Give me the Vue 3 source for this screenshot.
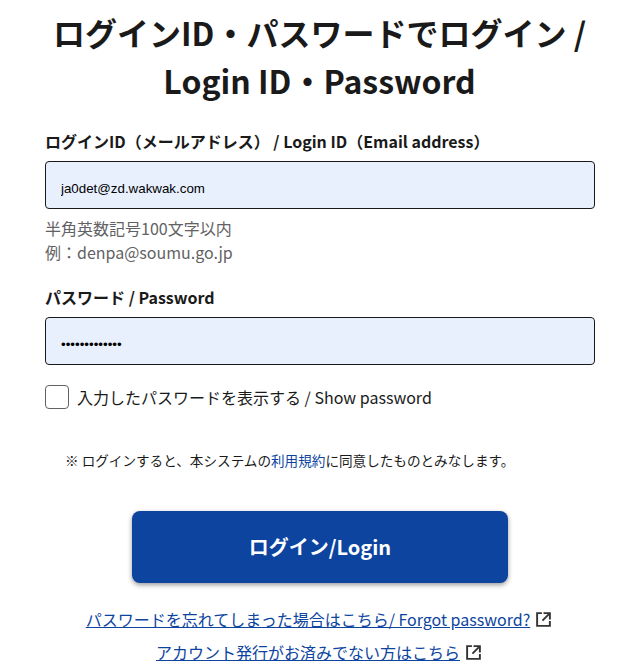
<script setup>
import { ref } from "vue";
const loginId = ref("ja0det@zd.wakwak.com");
const password = ref("aaaaaaaaaaaaa");
const showPassword = ref(false);
</script>
<template>
  <main class="page">
    <h1 class="title">ログインID・パスワードでログイン / Login ID・Password</h1>
    <form class="form" @submit.prevent>
      <div class="field">
        <label class="label" for="login-id">ログインID（メールアドレス） / Login ID（Email address）</label>
        <input id="login-id" v-model="loginId" class="input" type="text" />
        <p class="hint">半角英数記号100文字以内<br />例：denpa@soumu.go.jp</p>
      </div>
      <div class="field field-password">
        <label class="label" for="password">パスワード / Password</label>
        <input id="password" v-model="password" class="input" :type="showPassword ? 'text' : 'password'" />
      </div>
      <label class="check">
        <input v-model="showPassword" class="checkbox" type="checkbox" />
        <span>入力したパスワードを表示する / Show password</span>
      </label>
      <p class="notice">※ ログインすると、本システムの<a href="#">利用規約</a>に同意したものとみなします。</p>
      <button class="submit" type="submit">ログイン/Login</button>
      <div class="links">
        <p class="link-row">
          <a href="#">パスワードを忘れてしまった場合はこちら/ Forgot password?</a>
          <svg class="ext" viewBox="0 0 16 16" fill="none" stroke="#333" stroke-width="1.8">
            <path d="M6.5 2H2v12h12V9.5" />
            <path d="M8 2h6v6M14 2L7 9" />
          </svg>
        </p>
        <p class="link-row">
          <a href="#">アカウント発行がお済みでない方はこちら</a>
          <svg class="ext" viewBox="0 0 16 16" fill="none" stroke="#333" stroke-width="1.8">
            <path d="M6.5 2H2v12h12V9.5" />
            <path d="M8 2h6v6M14 2L7 9" />
          </svg>
        </p>
      </div>
    </form>
  </main>
</template>
<style>
html,
body {
  margin: 0;
  background: #fff;
}
</style>
<style scoped>
.page {
  height: 672px;
  overflow: hidden;
  box-sizing: border-box;
  padding: 8px 22px 0 45px;
  font-family: "Noto Sans CJK JP", "Noto Sans", sans-serif;
  color: #1a1a1a;
}

.title {
  margin: 0 -20px 25px -21px;
  font-size: 32px;
  line-height: 48px;
  font-weight: 700;
  text-align: center;
}

.form {
  display: flex;
  flex-direction: column;
}

.label {
  display: block;
  margin-bottom: 8px;
  font-size: 16px;
  line-height: 24px;
  font-weight: 700;
}

.input {
  display: block;
  width: 100%;
  height: 48px;
  box-sizing: border-box;
  padding: 7px 15px 0;
  border: 1px solid #1a1a1a;
  border-radius: 4px;
  background: #e8f0fe;
  font-family: "Liberation Sans", sans-serif;
  font-size: 13.33px;
  color: #000;
  outline: none;
}

.hint {
  margin: 7px 0 0;
  font-size: 16px;
  line-height: 24px;
  color: #626264;
}

.field-password {
  margin-top: 21px;
}

.check {
  display: flex;
  align-items: center;
  gap: 8px;
  margin-top: 20px;
  font-size: 16px;
  line-height: 24px;
}

.checkbox {
  appearance: none;
  width: 24px;
  height: 24px;
  margin: 0;
  border: 1px solid #626264;
  border-radius: 4px;
  background: #fff;
}

.notice {
  margin: 41px 0 0 20px;
  font-size: 13.6px;
  line-height: 20px;
}

.notice a {
  color: #0c44a0;
  text-decoration: none;
}

.submit {
  align-self: center;
  width: 376px;
  height: 72px;
  margin-top: 41px;
  padding: 0 0 2px;
  border: none;
  border-radius: 8px;
  background: #0c44a0;
  box-shadow: 0 2px 5px rgba(0, 0, 0, 0.4);
  color: #fff;
  font-family: inherit;
  font-size: 20px;
  font-weight: 700;
}

.links {
  margin-top: 24px;
}

.link-row {
  display: flex;
  align-items: center;
  justify-content: center;
  gap: 5px;
  margin: 0 0 9px;
  padding-right: 2px;
  font-size: 16px;
  line-height: 24px;
}

.link-row a {
  color: #0c44a0;
}

.ext {
  width: 17px;
  height: 17px;
}
</style>
